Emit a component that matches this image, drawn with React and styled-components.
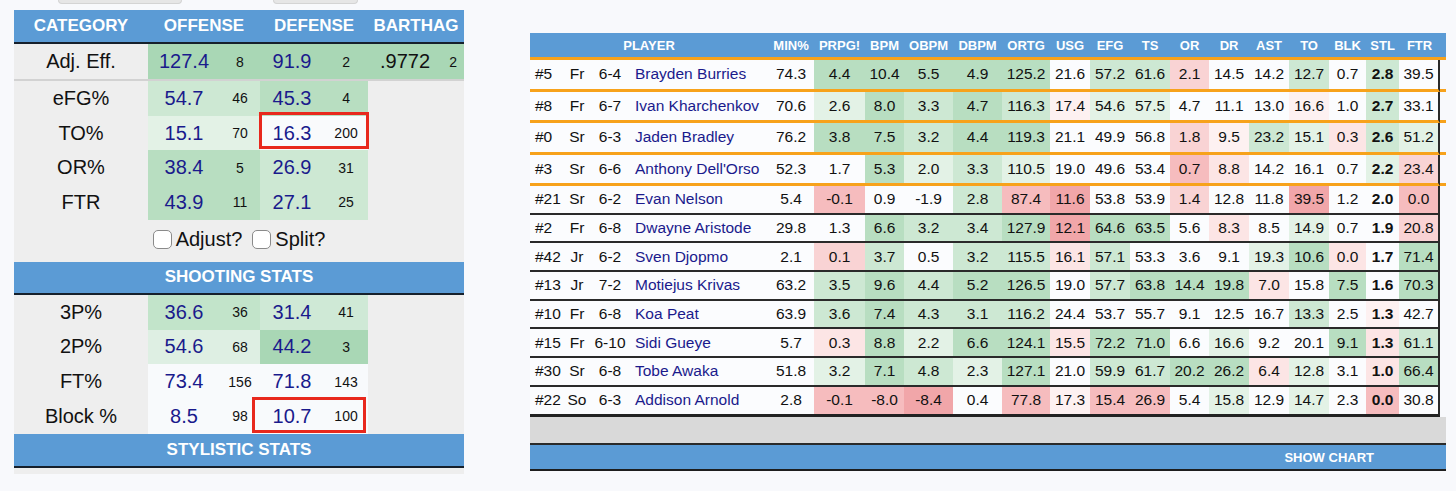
import React from 'react';
import styled, { createGlobalStyle } from 'styled-components';

const GlobalStyle = createGlobalStyle`
  * { box-sizing: border-box; }
  html, body { margin: 0; padding: 0; background: #f8f9fc; }
  body { font-family: "Liberation Sans", Arial, sans-serif; color: #111; }
`;

const BLUE = '#5b9bd5';
const ORANGE = '#f7a21b';
const NAVY = '#1a1a8c';

const SHADES = {
  g4: '#a6d5b2',
  g3: '#b8dec1',
  g2: '#cde8d3',
  g1: '#e3f2e6',
  n: 'transparent',
  r0: '#fdf1f1',
  r1: '#fce5e5',
  r2: '#f9d3d4',
  r3: '#f6bcbe',
  r4: '#f1a6a9',
};

const Page = styled.div`
  display: flex;
  align-items: flex-start;
  width: 1456px;
  height: 491px;
  overflow: hidden;
`;

/* ---------- left panel ---------- */

const LeftColumn = styled.div`
  margin-left: 14px;
  width: 450px;
  display: flex;
  flex-direction: column;
`;

const StubRow = styled.div`
  height: 10px;
  display: flex;
  align-items: flex-start;
`;

const Stub = styled.div`
  margin-left: ${(p) => p.$left}px;
  width: ${(p) => p.$w}px;
  height: 4px;
  background: #e6e6e6;
  border: 1px solid #d4d4d4;
  border-top: none;
  border-radius: 0 0 7px 7px;
`;

const Panel = styled.div`
  background: #eeeeee;
  padding-bottom: 6px;
`;

const StatTable = styled.table`
  width: 450px;
  table-layout: fixed;
  border-collapse: separate;
  border-spacing: 0;
`;

const HeadCell = styled.th`
  background: ${BLUE};
  color: #fff;
  font-size: 17px;
  font-weight: bold;
  height: ${(p) => p.$h || 34}px;
  padding: 0;
  text-align: center;
  vertical-align: middle;
  border-bottom: 2px solid #16202c;
`;

const CatCell = styled.td`
  height: ${(p) => p.$h || 34.7}px;
  padding: 0;
  text-align: center;
  vertical-align: middle;
  font-size: 20px;
  color: #111;
  border-bottom: ${(p) => (p.$divider ? '2px solid #d2d2d2' : 'none')};
`;

const ValCell = styled.td`
  position: relative;
  height: ${(p) => p.$h || 34.7}px;
  padding: 0;
  text-align: center;
  vertical-align: middle;
  font-size: 20px;
  color: ${(p) => p.$ink || NAVY};
  background: ${(p) => p.$bg || 'transparent'};
  border-bottom: ${(p) => (p.$divider ? '2px solid #d2d2d2' : 'none')};
`;

const RankCell = styled(ValCell)`
  font-size: 14px;
  color: #111;
`;

const RedBox = styled.span`
  position: absolute;
  z-index: 2;
  left: ${(p) => p.$l}px;
  top: ${(p) => p.$t}px;
  width: ${(p) => p.$w}px;
  height: ${(p) => p.$h}px;
  border: 3px solid #e8281d;
  pointer-events: none;
`;

const OptionCell = styled.td`
  height: 42px;
  padding: 0;
  text-align: center;
  vertical-align: middle;
  font-size: 20px;
  color: #111;
`;

const OptionLabel = styled.label`
  display: inline-flex;
  align-items: center;
  gap: 4px;
  margin: 0 5px;
`;

const Check = styled.input`
  appearance: none;
  -webkit-appearance: none;
  margin: 0;
  width: 19px;
  height: 19px;
  border: 1.5px solid #8a8a8a;
  border-radius: 5px;
  background: #fff;
`;

const leftRows = [
  { cat: 'eFG%', o: ['54.7', '46', SHADES.g2], d: ['45.3', '4', SHADES.g3] },
  { cat: 'TO%', o: ['15.1', '70', SHADES.g1], d: ['16.3', '200', '#f9fafc'], box: { l: -1, t: -4, w: 110, h: 37 } },
  { cat: 'OR%', o: ['38.4', '5', SHADES.g3], d: ['26.9', '31', SHADES.g2] },
  { cat: 'FTR', o: ['43.9', '11', SHADES.g3], d: ['27.1', '25', SHADES.g2] },
];

const shootRows = [
  { cat: '3P%', o: ['36.6', '36', '#c2e4ca'], d: ['31.4', '41', '#cfe9d6'] },
  { cat: '2P%', o: ['54.6', '68', '#deefe3'], d: ['44.2', '3', '#a9d7b5'] },
  { cat: 'FT%', o: ['73.4', '156', '#f8fafc'], d: ['71.8', '143', '#f8fafc'] },
  { cat: 'Block %', o: ['8.5', '98', '#f8fafc'], d: ['10.7', '100', '#f8fafc'], box: { l: -8, t: -2, w: 114, h: 36 } },
];

function StatRow({ r }) {
  return (
    <tr>
      <CatCell>{r.cat}</CatCell>
      <ValCell $bg={r.o[2]}>{r.o[0]}</ValCell>
      <RankCell $bg={r.o[2]}>{r.o[1]}</RankCell>
      <ValCell $bg={r.d[2]}>
        {r.d[0]}
        {r.box && <RedBox $l={r.box.l} $t={r.box.t} $w={r.box.w} $h={r.box.h} />}
      </ValCell>
      <RankCell $bg={r.d[2]}>{r.d[1]}</RankCell>
      <td />
      <td />
    </tr>
  );
}

function LeftPanel() {
  const adj = '#a9d7b5';
  return (
    <LeftColumn>
      <StubRow>
        <Stub $left={44} $w={124} />
        <Stub $left={91} $w={85} />
      </StubRow>
      <Panel>
        <StatTable>
          <colgroup>
            <col style={{ width: 134 }} />
            <col style={{ width: 72 }} />
            <col style={{ width: 40 }} />
            <col style={{ width: 64 }} />
            <col style={{ width: 44 }} />
            <col style={{ width: 74 }} />
            <col style={{ width: 22 }} />
          </colgroup>
          <thead>
            <tr>
              <HeadCell>CATEGORY</HeadCell>
              <HeadCell colSpan={2}>OFFENSE</HeadCell>
              <HeadCell colSpan={2}>DEFENSE</HeadCell>
              <HeadCell colSpan={2}>BARTHAG</HeadCell>
            </tr>
          </thead>
          <tbody>
            <tr>
              <CatCell $h={37} $divider>Adj. Eff.</CatCell>
              <ValCell $h={37} $bg={adj} $divider>127.4</ValCell>
              <RankCell $h={37} $bg={adj} $divider>8</RankCell>
              <ValCell $h={37} $bg={adj} $divider>91.9</ValCell>
              <RankCell $h={37} $bg={adj} $divider>2</RankCell>
              <ValCell $h={37} $bg={adj} $divider $ink="#111">.9772</ValCell>
              <RankCell $h={37} $bg={adj} $divider>2</RankCell>
            </tr>
            {leftRows.map((r) => (
              <StatRow key={r.cat} r={r} />
            ))}
            <tr>
              <OptionCell colSpan={7}>
                <OptionLabel>
                  <Check type="checkbox" />
                  Adjust?
                </OptionLabel>
                <OptionLabel>
                  <Check type="checkbox" />
                  Split?
                </OptionLabel>
              </OptionCell>
            </tr>
            <tr>
              <HeadCell colSpan={7} $h={33.2}>SHOOTING STATS</HeadCell>
            </tr>
            {shootRows.map((r) => (
              <StatRow key={r.cat} r={r} />
            ))}
            <tr>
              <HeadCell colSpan={7} $h={34}>STYLISTIC STATS</HeadCell>
            </tr>
          </tbody>
        </StatTable>
      </Panel>
    </LeftColumn>
  );
}

/* ---------- right panel ---------- */

const RightColumn = styled.div`
  margin-left: 66px;
  margin-top: 33px;
  width: 916px;
  display: flex;
  flex-direction: column;
`;

const PlayerTable = styled.table`
  width: 916px;
  table-layout: fixed;
  border-collapse: separate;
  border-spacing: 0;
`;

const PHead = styled.th`
  background: ${BLUE};
  color: #fff;
  font-size: 13px;
  font-weight: bold;
  height: 27px;
  padding: 0;
  text-align: center;
  vertical-align: middle;
  white-space: nowrap;
  border-bottom: 3px solid ${ORANGE};
`;

const PCell = styled.td`
  height: ${(p) => (p.$orange ? 31.5 : p.$last ? 29.7 : 28.7)}px;
  padding: 0 0 0 ${(p) => (p.$left ? 5 : 0)}px;
  text-align: ${(p) => (p.$left ? 'left' : 'center')};
  vertical-align: middle;
  font-size: 15.5px;
  white-space: nowrap;
  overflow: hidden;
  color: ${(p) => (p.$name ? NAVY : '#111')};
  font-weight: ${(p) => (p.$bold ? 'bold' : 'normal')};
  background: ${(p) => p.$bg || '#fbfcfe'};
  border-bottom: ${(p) =>
    p.$orange ? `3px solid ${ORANGE}` : p.$last ? '3px solid #222' : '2px solid #2a2a2a'};
  border-right: ${(p) => (p.$edge ? '2px solid #2a2a2a' : 'none')};
`;

const Spill = styled.td`
  padding: 0;
  background: #f8f9fc;
  border-bottom: ${(p) => (p.$orange ? `3px solid ${ORANGE}` : 'none')};
`;

const GrayBand = styled.div`
  height: 26.7px;
  background: #d9d9d9;
`;

const ChartBar = styled.div`
  height: 28px;
  background: ${BLUE};
  border-top: 2px solid #2a2a2a;
  border-bottom: 2px solid #1e1e1e;
  display: flex;
  align-items: center;
  justify-content: flex-end;
  padding-right: 72px;
  color: #fff;
  font-size: 13px;
  font-weight: bold;
`;

const colWidths = [34, 26, 40, 138, 46, 51, 39, 49, 49, 48, 40, 40, 40, 39, 40, 40, 40, 37, 33, 41, 6];
const statHeads = ['PRPG!', 'BPM', 'OBPM', 'DBPM', 'ORTG', 'USG', 'EFG', 'TS', 'OR', 'DR', 'AST', 'TO', 'BLK', 'STL', 'FTR'];

const players = [
  ['#5', 'Fr', '6-4', 'Brayden Burries', '74.3', '4.4 g3|10.4 g3|5.5 g3|4.9 g3|125.2 g3|21.6 n|57.2 g2|61.6 g2|2.1 r2|14.5 n|14.2 n|12.7 g2|0.7 n|2.8 g2|39.5 n'],
  ['#8', 'Fr', '6-7', 'Ivan Kharchenkov', '70.6', '2.6 g1|8.0 g3|3.3 g2|4.7 g3|116.3 g2|17.4 r0|54.6 g1|57.5 g1|4.7 n|11.1 n|13.0 n|16.6 r0|1.0 n|2.7 g2|33.1 n'],
  ['#0', 'Sr', '6-3', 'Jaden Bradley', '76.2', '3.8 g3|7.5 g3|3.2 g2|4.4 g3|119.3 g3|21.1 n|49.9 n|56.8 n|1.8 r2|9.5 r0|23.2 g2|15.1 g1|0.3 r1|2.6 g2|51.2 g1'],
  ['#3', 'Sr', '6-6', "Anthony Dell'Orso", '52.3', '1.7 n|5.3 g3|2.0 g1|3.3 g2|110.5 g1|19.0 n|49.6 n|53.4 n|0.7 r3|8.8 r1|14.2 n|16.1 n|0.7 n|2.2 g1|23.4 r2'],
  ['#21', 'Sr', '6-2', 'Evan Nelson', '5.4', '-0.1 r3|0.9 n|-1.9 n|2.8 g2|87.4 r3|11.6 r4|53.8 n|53.9 n|1.4 r2|12.8 n|11.8 n|39.5 r4|1.2 n|2.0 n|0.0 r3'],
  ['#2', 'Fr', '6-8', 'Dwayne Aristode', '29.8', '1.3 n|6.6 g3|3.2 g2|3.4 g2|127.9 g3|12.1 r4|64.6 g3|63.5 g3|5.6 n|8.3 r1|8.5 n|14.9 g1|0.7 n|1.9 n|20.8 r2'],
  ['#42', 'Jr', '6-2', 'Sven Djopmo', '2.1', '0.1 r2|3.7 g2|0.5 n|3.2 g2|115.5 g2|16.1 r1|57.1 g2|53.3 n|3.6 n|9.1 n|19.3 g1|10.6 g3|0.0 r1|1.7 n|71.4 g3'],
  ['#13', 'Jr', '7-2', 'Motiejus Krivas', '63.2', '3.5 g2|9.6 g3|4.4 g2|5.2 g3|126.5 g3|19.0 n|57.7 g2|63.8 g3|14.4 g3|19.8 g3|7.0 r1|15.8 n|7.5 g3|1.6 n|70.3 g3'],
  ['#10', 'Fr', '6-8', 'Koa Peat', '63.9', '3.6 g2|7.4 g3|4.3 g2|3.1 g2|116.2 g2|24.4 n|53.7 n|55.7 n|9.1 n|12.5 n|16.7 n|13.3 g2|2.5 n|1.3 r0|42.7 n'],
  ['#15', 'Fr', '6-10', 'Sidi Gueye', '5.7', '0.3 r1|8.8 g3|2.2 g1|6.6 g3|124.1 g3|15.5 r1|72.2 g3|71.0 g3|6.6 n|16.6 g1|9.2 n|20.1 n|9.1 g3|1.3 r1|61.1 g2'],
  ['#30', 'Sr', '6-8', 'Tobe Awaka', '51.8', '3.2 g1|7.1 g3|4.8 g2|2.3 g1|127.1 g3|21.0 n|59.9 g2|61.7 g2|20.2 g3|26.2 g3|6.4 r1|12.8 g1|3.1 n|1.0 r1|66.4 g3'],
  ['#22', 'So', '6-3', 'Addison Arnold', '2.8', '-0.1 r3|-8.0 r3|-8.4 r4|0.4 n|77.8 r3|17.3 r0|15.4 r3|26.9 r3|5.4 n|15.8 g1|12.9 n|14.7 g1|2.3 n|0.0 r3|30.8 n'],
];

function PlayerRow({ p, index }) {
  const orange = index < 4;
  const last = index === players.length - 1;
  const stats = p[5].split('|').map((s) => s.split(' '));
  const common = { $orange: orange, $last: last };
  return (
    <tr>
      <PCell {...common} $left>{p[0]}</PCell>
      <PCell {...common}>{p[1]}</PCell>
      <PCell {...common}>{p[2]}</PCell>
      <PCell {...common} $left $name>{p[3]}</PCell>
      <PCell {...common}>{p[4]}</PCell>
      {stats.map(([v, s], i) => (
        <PCell
          key={i}
          {...common}
          $bg={s === 'n' ? undefined : SHADES[s]}
          $bold={i === 13}
          $edge={i === 14}
        >
          {v}
        </PCell>
      ))}
      <Spill $orange={orange} />
    </tr>
  );
}

function PlayerPanel() {
  return (
    <RightColumn>
      <PlayerTable>
        <colgroup>
          {colWidths.map((w, i) => (
            <col key={i} style={{ width: w }} />
          ))}
        </colgroup>
        <thead>
          <tr>
            <PHead colSpan={4}>PLAYER</PHead>
            <PHead>MIN%</PHead>
            {statHeads.map((h) => (
              <PHead key={h}>{h}</PHead>
            ))}
            <PHead />
          </tr>
        </thead>
        <tbody>
          {players.map((p, i) => (
            <PlayerRow key={p[0]} p={p} index={i} />
          ))}
        </tbody>
      </PlayerTable>
      <GrayBand />
      <ChartBar>SHOW CHART</ChartBar>
    </RightColumn>
  );
}

export default function App() {
  return (
    <>
      <GlobalStyle />
      <Page>
        <LeftPanel />
        <PlayerPanel />
      </Page>
    </>
  );
}
